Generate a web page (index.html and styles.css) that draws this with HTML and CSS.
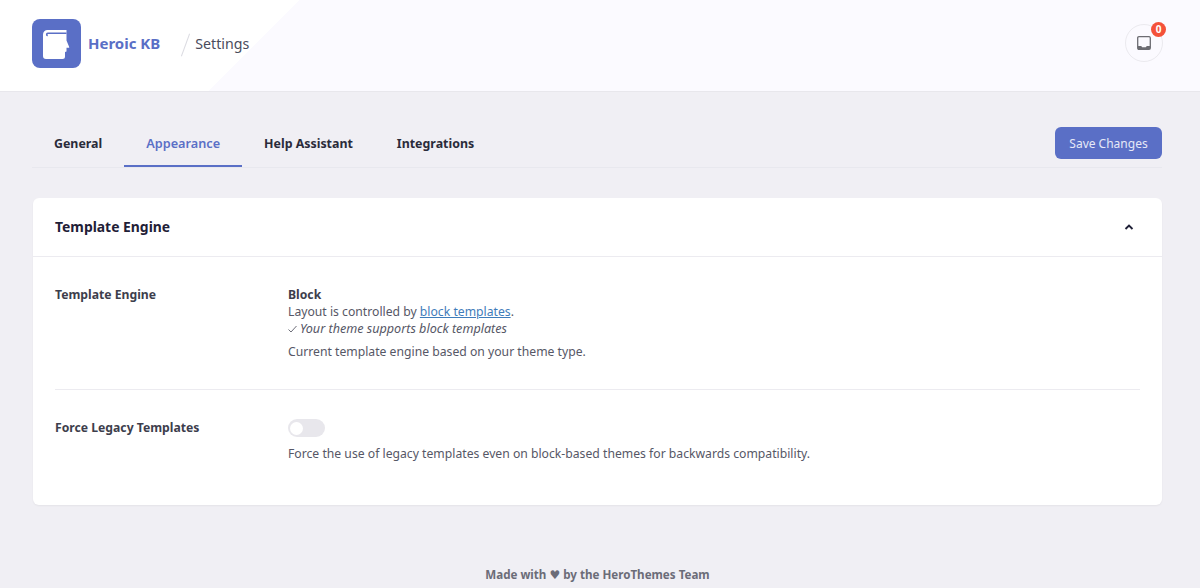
FILE: index.html

```html
<!DOCTYPE html>
<html lang="en">
<head>
  <meta charset="UTF-8" />
  <meta name="viewport" content="width=device-width, initial-scale=1.0"/>
  <title>Heroic KB Settings</title>
  <link rel="stylesheet" href="styles.css">
</head>
<body>

<header class="topbar">
  <div class="brand">
    <div class="logo">
      <svg width="49" height="49" viewBox="0 0 49 49">
        <path d="M11 15.500a4.500 4.500 0 0 1 4.500-4.500H34.500V21.500l2.700 6.500v.8h-2.700V32.500l-1.500.5v4.500a2.500 2.500 0 0 1-2.500 2.500H14a3 3 0 0 1-3-3z" fill="#fff"/>
        <path d="M34.500 14.300H15.800a1.100 1.100 0 0 0 0 2.200" fill="none" stroke="#5a6fc6" stroke-width="1.600"/>
      </svg>
    </div>
    <span class="brand-name">Heroic KB</span>
    <span class="crumb-slash"></span>
    <span class="crumb">Settings</span>
  </div>
  <div class="inbox">
    <svg width="16" height="16" viewBox="0 0 16 16" fill="none" stroke="#6c6c72" stroke-width="1.300">
      <rect x="1.700" y="1.700" width="12.600" height="12.600" rx="1.200"/>
      <path d="M2 11h3.200l1 1.200h3.600l1-1.200H14v3H2z" fill="#6c6c72" stroke="none"/>
    </svg>
    <span class="badge">0</span>
  </div>
</header>

<main class="content">
  <div class="tabbar">
    <nav class="tabs">
      <a class="tab">General</a>
      <a class="tab active">Appearance</a>
      <a class="tab">Help Assistant</a>
      <a class="tab">Integrations</a>
    </nav>
    <button class="save-btn">Save Changes</button>
  </div>

  <section class="card">
    <div class="card-head">
      <h2>Template Engine</h2>
      <svg width="12" height="12" viewBox="0 0 12 12" fill="none" stroke="#1f2037" stroke-width="1.900">
        <path d="M2.500 8l3.500-3.500L9.500 8"/>
      </svg>
    </div>
    <div class="card-body">
      <div class="row">
        <div class="row-label">Template Engine</div>
        <div class="row-value">
          <div class="strong">Block</div>
          <div>Layout is controlled by <a class="link">block templates</a>.</div>
          <div class="supports">
            <svg class="check" width="9" height="8" viewBox="0 0 9 8" fill="none" stroke="#5c5d6a" stroke-width="0.900">
              <path d="M.5 4.500l2.500 2.500L8.500 1"/>
            </svg>Your theme supports block templates
          </div>
          <p class="desc">Current template engine based on your theme type.</p>
        </div>
      </div>
      <div class="row last">
        <div class="row-label">Force Legacy Templates</div>
        <div class="row-value">
          <div class="toggle"><span class="knob"></span></div>
          <p class="desc">Force the use of legacy templates even on block-based themes for backwards compatibility.</p>
        </div>
      </div>
    </div>
  </section>
</main>

<footer class="footer">Made with <span class="heart">♥</span> by the HeroThemes Team</footer>

</body>
</html>
```

FILE: styles.css

```css
body {
  font-family: "Noto Sans", sans-serif;
  background: #f0eff4;
  margin: 0;
  padding: 0;
  font-size: 12.200px;
  color: #565766;
  height: 588px;
  overflow: hidden;
}
.topbar {
  height: 91px;
  display: flex;
  align-items: center;
  justify-content: space-between;
  padding: 0 37px 0 32px;
  background: linear-gradient(135deg, #fff 23.200%, #fbfaff 23.200%);
  border-bottom: 1px solid #e8e7ec;
}
.brand {
  display: flex;
  align-items: center;
  margin-top: -4px;
}
.logo {
  width: 49px;
  height: 49px;
  background: #5a6fc6;
  border-radius: 8px;
}
.brand-name {
  color: #5a6fc6;
  font-size: 15px;
  font-weight: 700;
  margin: -2px 0 0 7px;
}
.crumb-slash {
  width: 1px;
  height: 24px;
  background: #dcdce2;
  transform: rotate(20deg);
  margin: 2px 9px 0 25px;
}
.crumb {
  color: #4a4b5c;
  font-size: 14.200px;
}
.inbox {
  position: relative;
  width: 38px;
  height: 38px;
  box-sizing: border-box;
  border: 1px solid #ebeaef;
  border-radius: 50%;
  display: flex;
  align-items: center;
  justify-content: center;
  margin-top: -5px;
}
.badge {
  position: absolute;
  top: -3px;
  right: -4px;
  width: 15px;
  height: 15px;
  background: #f4513a;
  color: #fff;
  border-radius: 50%;
  font-size: 10px;
  font-weight: 700;
  line-height: 15px;
  text-align: center;
}
.content {
  padding: 35px 38px 0 32px;
}
.tabbar {
  display: flex;
  justify-content: space-between;
  align-items: flex-start;
  border-bottom: 1px solid #e8e8ee;
  height: 40px;
}
.tabs {
  display: flex;
}
.tab {
  padding: 0 22px;
  height: 40px;
  box-sizing: border-box;
  line-height: 33px;
  font-size: 12.400px;
  font-weight: 700;
  color: #2a2b3a;
}
.tab.active {
  color: #5a6fc6;
  border-bottom: 2px solid #5a6fc6;
  font-weight: 600;
  font-size: 12.700px;
}
.save-btn {
  background: #5a6fc6;
  color: #e6e9f7;
  border: none;
  border-radius: 6px;
  width: 107px;
  height: 32px;
  font-family: inherit;
  font-size: 12px;
}
.card {
  margin: 30px 0 0 1px;
  background: #fff;
  border-radius: 6px;
  box-shadow: 0 1px 2px rgba(0,0,0,0.05);
}
.card-head {
  height: 58px;
  display: flex;
  align-items: center;
  justify-content: space-between;
  padding: 0 27px 0 22px;
  border-bottom: 1px solid #ecebf0;
}
.card-head h2 {
  margin: 0 0 2px;
  font-size: 13.900px;
  font-weight: 700;
  color: #1f2037;
}
.card-body {
  padding: 0 22px;
}
.row {
  display: flex;
  padding: 29px 0 29px;
  border-bottom: 1px solid #ecebf0;
  line-height: 17px;
}
.row.last {
  border-bottom: none;
  padding-top: 28px;
  padding-bottom: 43px;
}
.row-label {
  width: 233px;
  flex-shrink: 0;
  font-weight: 700;
  color: #3d3e4c;
}
.row.last .row-label {
  padding-top: 1px;
}
.strong {
  font-weight: 700;
  color: #3d3e4c;
}
.supports {
  font-style: italic;
  font-size: 12.600px;
}
.check {
  margin-right: 3px;
}
.link {
  color: #3f7cba;
  text-decoration: underline;
}
.desc {
  margin: 6px 0 0;
}
.toggle {
  width: 37px;
  height: 18px;
  margin-top: 1px;
  border-radius: 9px;
  background: #e8e7ec;
  display: flex;
  align-items: center;
  padding-left: 2px;
  box-sizing: border-box;
}
.toggle + .desc {
  margin-top: 8px;
}
.knob {
  width: 13px;
  height: 13px;
  border-radius: 50%;
  background: #fff;
}
.footer {
  text-align: center;
  margin-top: 62px;
  padding-right: 5px;
  font-weight: 700;
  font-size: 11.600px;
  color: #6b6c78;
}
.heart {
  font-family: "DejaVu Sans", sans-serif;
  font-size: 12px;
}
```
